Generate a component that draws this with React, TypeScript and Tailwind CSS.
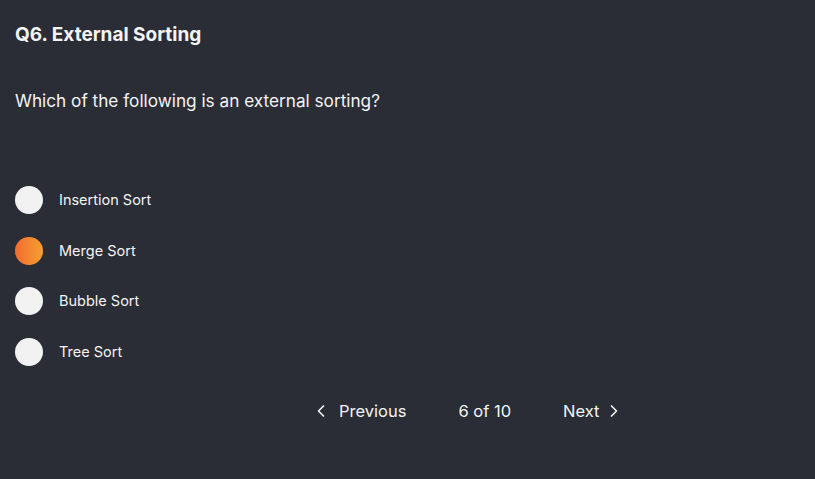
import { ChevronLeft, ChevronRight } from "lucide-react";

const options = ["Insertion Sort", "Merge Sort", "Bubble Sort", "Tree Sort"];

export default function App() {
  const selected = 1;
  return (
    <div className="h-[479px] w-full bg-[#2a2d35] px-[15px] pt-[24px] text-[#f4f4f4] font-['Inter','Noto_Sans',sans-serif]">
      <h1 className="text-[19px] font-bold leading-[22px]">Q6. External Sorting</h1>
      <p className="mt-[44px] text-[17.2px] leading-[22px]">Which of the following is an external sorting?</p>

      <div className="mt-[74px] flex flex-col gap-[22.5px]">
        {options.map((opt, i) => (
          <label key={opt} className="flex items-center gap-[16px]">
            <span
              className={`h-[28px] w-[28px] rounded-full ${
                i === selected ? "bg-gradient-to-r from-[#f26a2e] to-[#f59f32]" : "bg-[#f2f2f2]"
              }`}
            />
            <span className="text-[14.5px]">{opt}</span>
          </label>
        ))}
      </div>

      <div className="mt-[33px] flex items-center pl-[296px] text-[16.5px]">
        <button type="button" className="flex items-center gap-[8px]">
          <ChevronLeft className="h-[20px] w-[20px]" strokeWidth={2} />
          Previous
        </button>
        <span className="ml-[52px]">6 of 10</span>
        <button type="button" className="ml-[52px] flex items-center gap-[5px]">
          Next
          <ChevronRight className="h-[20px] w-[20px]" strokeWidth={2} />
        </button>
      </div>
    </div>
  );
}
